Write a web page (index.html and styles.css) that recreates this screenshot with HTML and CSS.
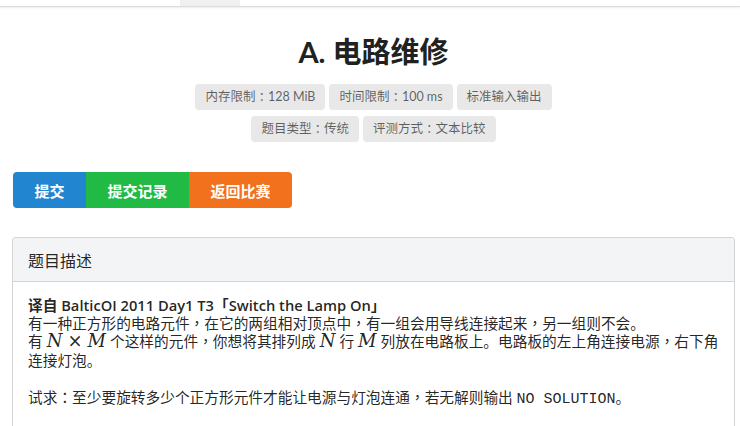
FILE: index.html
```html
<!DOCTYPE html>
<html lang="zh-CN">
<head>
<meta charset="utf-8">
<title>A. 电路维修</title>
<link rel="stylesheet" href="styles.css">
</head>
<body>
<div class="nav"><div class="nav-item"></div></div>
<main class="page">
  <h1 class="title">A. 电路维修</h1>
  <div class="labels">
    <div class="label-row">
      <span class="label">内存限制<span class="fw" lang="zh-TW">：</span>128 MiB</span>
      <span class="label">时间限制<span class="fw" lang="zh-TW">：</span>100 ms</span>
      <span class="label">标准输入输出</span>
    </div>
    <div class="label-row">
      <span class="label">题目类型<span class="fw" lang="zh-TW">：</span>传统</span>
      <span class="label">评测方式<span class="fw" lang="zh-TW">：</span>文本比较</span>
    </div>
  </div>
  <div class="buttons">
    <a class="btn btn-blue">提交</a>
    <a class="btn btn-green">提交记录</a>
    <a class="btn btn-orange">返回比赛</a>
  </div>
  <section class="panel">
    <div class="panel-head">题目描述</div>
    <div class="panel-body">
      <p><strong>译自 BalticOI 2011 Day1 T3「Switch the Lamp On」</strong><br>
      有一种正方形的电路元件<span class="fw" lang="zh-TW">，</span>在它的两组相对顶点中<span class="fw" lang="zh-TW">，</span>有一组会用导线连接起来<span class="fw" lang="zh-TW">，</span>另一组则不会。<br>
      有<span class="math"><i>N</i><span class="op">×</span><i>M</i></span>个这样的元件<span class="fw" lang="zh-TW">，</span>你想将其排列成<span class="math"><i>N</i></span>行<span class="math"><i>M</i></span>列放在电路板上。电路板的左上角连接电源<span class="fw" lang="zh-TW">，</span>右下角连接灯泡。</p>
      <p>试求<span class="fw" lang="zh-TW">：</span>至少要旋转多少个正方形元件才能让电源与灯泡连通<span class="fw" lang="zh-TW">，</span>若无解则输出 <code>NO SOLUTION</code>。</p>
    </div>
  </section>
</main>
</body>
</html>
```

FILE: styles.css
```css
html, body {
  margin: 0;
  padding: 0;
  background: #fff;
}
body {
  font-family: "Lato", "Noto Sans CJK SC", sans-serif;
  color: rgba(0, 0, 0, 0.87);
  overflow: hidden;
}
.nav {
  height: 6px;
  border-bottom: 1px solid #dcdcdc;
  box-shadow: 0 1px 2px rgba(0, 0, 0, 0.08);
  display: flex;
}
.nav-item {
  margin-left: 180px;
  width: 60px;
  height: 6px;
  background: #f0f0f0;
}
.page {
  margin: 0 5px 0 12px;
}
.title {
  margin: 28px 0 0;
  font-size: 29px;
  line-height: 34px;
  font-weight: 700;
  text-align: center;
  color: #212121;
}
.labels {
  margin-top: 15px;
  display: flex;
  flex-direction: column;
  gap: 6px;
  align-items: center;
}
.label-row {
  display: flex;
  gap: 4px;
}
.label {
  display: inline-flex;
  align-items: center;
  white-space: pre;
  height: 26px;
  box-sizing: border-box;
  background: #e8e8e8;
  color: rgba(0, 0, 0, 0.6);
  font-size: 12.5px;
  line-height: 1;
  padding: 0 10px;
  border-radius: 4px;
}
.buttons {
  margin-top: 30px;
  margin-left: 1px;
  display: flex;
  width: max-content;
}
.btn {
  display: flex;
  align-items: center;
  height: 36px;
  padding: 0 21.5px;
  font-size: 15px;
  font-weight: 700;
  color: #fff;
  cursor: pointer;
}
.btn-blue { background: #2185d0; border-radius: 4px 0 0 4px; }
.btn-green { background: #21ba45; }
.btn-orange { background: #f2711c; border-radius: 0 4px 4px 0; }
.panel {
  margin-top: 29px;
  border: 1px solid #d4d4d5;
  border-radius: 4px;
  border-bottom: none;
}
.panel-head {
  background: #f3f4f5;
  height: 44px;
  box-sizing: border-box;
  padding: 0 15px;
  display: flex;
  align-items: center;
  font-size: 16px;
  color: rgba(0, 0, 0, 0.87);
  border-bottom: 1px solid #d4d4d5;
  border-radius: 4px 4px 0 0;
}
.panel-body {
  padding: 14px 15px;
  font-family: "Open Sans", "Noto Sans CJK SC", sans-serif;
  font-size: 14.7px;
  line-height: 18.2px;
  color: rgba(0, 0, 0, 0.87);
}
.panel-body p {
  margin: 0 0 19px;
}
.panel-body strong {
  font-weight: 600;
}
.fw {
  font-family: "Noto Sans CJK TC", sans-serif;
}
.math {
  font-family: "DejaVu Serif", "Liberation Serif", serif;
  font-size: 18px;
  line-height: 1;
  margin: 0 4px;
}
.math i {
  font-style: italic;
}
.op {
  font-style: normal;
  margin: 0 5px;
}
code {
  font-family: "Liberation Mono", monospace;
  font-size: 15px;
}
```
